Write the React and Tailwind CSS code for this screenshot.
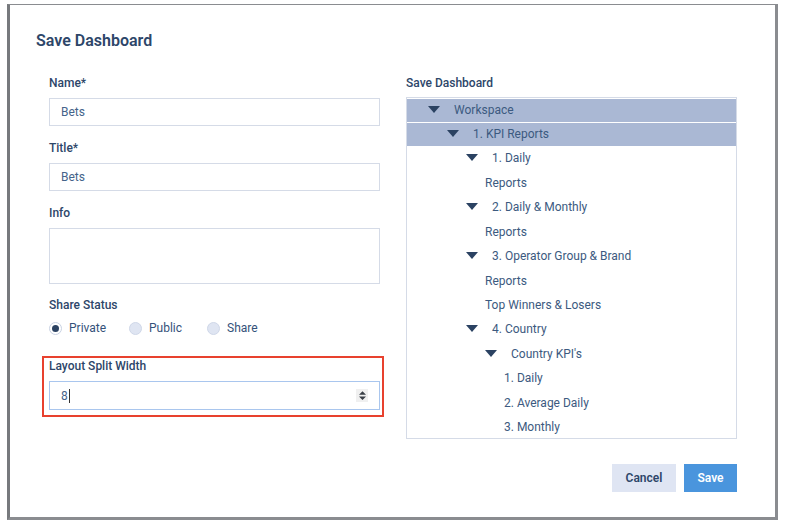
import React from "react";

const Tri = () => (
  <svg width="12" height="8" viewBox="0 0 12 8" className="shrink-0">
    <path d="M0 0 L12 0 L6 7 Z" fill="#2b4262" />
  </svg>
);

function Row({ level, tri, label, hl }) {
  const pad = { 0: "pl-[21px]", 1: "pl-[40px]", 2: "pl-[59px]", 3: "pl-[78px]" };
  return (
    <div
      className={`flex h-[23px] items-center pb-[2px] ${tri ? pad[level] : ""} ${hl ? "bg-[#aab8d4]" : ""}`}
    >
      {tri ? (
        <>
          <Tri />
          <span className="ml-[14px]">{label}</span>
        </>
      ) : (
        <span className={level === 4 ? "pl-[97px]" : "pl-[78px]"}>{label}</span>
      )}
    </div>
  );
}

function Radio({ checked, label }) {
  return (
    <label className="flex items-center gap-[7px]">
      <span
        className={`flex h-[13px] w-[13px] items-center justify-center rounded-full border ${
          checked ? "border-[#c9d2e3] bg-white" : "border-[#cfd7e8] bg-[#dfe5f2]"
        }`}
      >
        {checked && <span className="h-[7px] w-[7px] rounded-full bg-[#2b4262]" />}
      </span>
      <span>{label}</span>
    </label>
  );
}

export default function App() {
  const font = { fontFamily: "Roboto, 'Noto Sans', sans-serif" };
  return (
    <div className="h-[523px] w-[785px] bg-white pt-[4px] pl-[7px]" style={font}>
      <div className="relative h-[516px] w-[771px] border-l-[3px] border-t border-r-[3px] border-b-[3px] border-l-[#77797d] border-t-[#8a8c90] border-r-[#8a8c90] border-b-[#8a8c90] bg-white text-[#2d4669]">
        <div className="pl-[26px] pt-[26px] text-[16px] font-semibold leading-[20px] text-[#2d4669]">
          Save Dashboard
        </div>
        <div className="mt-[25px] flex">
          <div className="ml-[39px] w-[331px] text-[12px]">
            <div className="font-medium leading-[14px]">Name*</div>
            <div className="mt-[8px] flex h-[28px] items-center border border-[#d5dbe7] pl-[11px] text-[#45648a]">
              Bets
            </div>
            <div className="mt-[15px] font-medium leading-[14px]">Title*</div>
            <div className="mt-[8px] flex h-[28px] items-center border border-[#d5dbe7] pl-[11px] text-[#45648a]">
              Bets
            </div>
            <div className="mt-[15px] font-medium leading-[14px]">Info</div>
            <div className="mt-[8px] h-[56px] border border-[#d5dbe7]" />
            <div className="mt-[14px] font-medium leading-[14px]">Share Status</div>
            <div className="mt-[7px] flex items-center gap-[0px] text-[#34527a]">
              <div className="w-[80px]"><Radio checked label="Private" /></div>
              <div className="w-[78px]"><Radio label="Public" /></div>
              <Radio label="Share" />
            </div>
            <div className="relative -ml-[7px] mt-[19px] w-[342px] border-2 border-[#e8412e] pb-[5px] pl-[5px] pr-[2px] pt-[0px]">
              <div className="pt-[1px] font-medium leading-[14px]">Layout Split Width</div>
              <div className="mt-[8px] flex h-[29px] items-center justify-between border border-[#a9c6ee] pl-[11px] pr-[11px] text-[#45648a]">
                <span className="flex items-center">
                  8<span className="ml-[1px] inline-block h-[14px] w-px bg-[#333]" />
                </span>
                <span className="flex h-[13px] w-[12px] items-center justify-center bg-[#f0f0f0]">
                  <svg width="7" height="9" viewBox="0 0 8 10">
                    <path d="M0 4 L4 0 L8 4 Z M0 6 L8 6 L4 10 Z" fill="#3a3f47" />
                  </svg>
                </span>
              </div>
            </div>
          </div>
          <div className="ml-[26px] w-[331px] text-[12px]">
            <div className="font-medium leading-[14px]">Save Dashboard</div>
            <div className="mt-[7px] h-[342px] border border-[#d5dbe7] pt-px text-[#3c5a80]">
              <div className="flex flex-col gap-[1.45px]">
                <Row level={0} tri label="Workspace" hl />
                <Row level={1} tri label="1. KPI Reports" hl />
                <Row level={2} tri label="1. Daily" />
                <Row level={3} label="Reports" />
                <Row level={2} tri label="2. Daily & Monthly" />
                <Row level={3} label="Reports" />
                <Row level={2} tri label="3. Operator Group & Brand" />
                <Row level={3} label="Reports" />
                <Row level={3} label="Top Winners & Losers" />
                <Row level={2} tri label="4. Country" />
                <Row level={3} tri label="Country KPI's" />
                <Row level={4} label="1. Daily" />
                <Row level={4} label="2. Average Daily" />
                <Row level={4} label="3. Monthly" />
              </div>
            </div>
          </div>
        </div>
        <div className="mt-[25px] flex justify-end gap-[8px] pr-[38px] text-[12px] font-semibold">
          <button className="h-[28px] w-[64px] bg-[#dfe5f3] text-[#2d4669]">Cancel</button>
          <button className="h-[28px] w-[53px] bg-[#4a95dd] text-white">Save</button>
        </div>
      </div>
    </div>
  );
}
